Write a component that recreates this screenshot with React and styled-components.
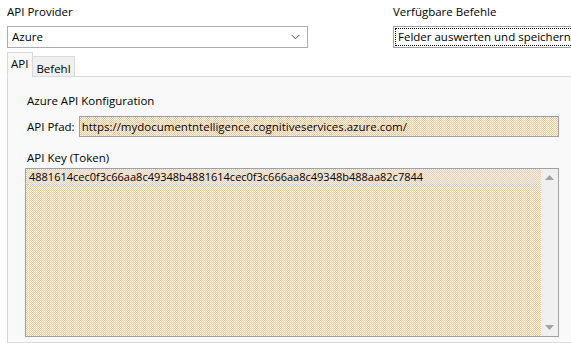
import React from "react";
import styled, { createGlobalStyle } from "styled-components";

const GlobalStyle = createGlobalStyle`
  html, body {
    margin: 0;
    padding: 0;
    background: #ffffff;
  }
  body {
    font-family: "Open Sans", "Liberation Sans", Arial, sans-serif;
    font-size: 11.5px;
    color: #000000;
  }
`;

const Window = styled.div`
  width: 571px;
  height: 343px;
  overflow: hidden;
  background: #ffffff;
  display: flex;
  flex-direction: column;
`;

const TopRow = styled.div`
  display: flex;
  padding: 5px 0 0 7px;
  gap: 85px;
`;

const Field = styled.div`
  display: flex;
  flex-direction: column;
  gap: 7px;
  width: ${(p) => p.width}px;
  flex-shrink: 0;
`;

const Label = styled.label`
  line-height: 14px;
  white-space: nowrap;
`;

const Combo = styled.div`
  height: 22px;
  box-sizing: border-box;
  border: 1px solid ${(p) => (p.focused ? "#a0a0a0" : "#adadad")};
  background: #ffffff;
  display: flex;
  align-items: center;
  padding: ${(p) => (p.focused ? "1px" : "0 0 0 3px")};
`;

const ComboText = styled.span`
  flex: 1;
  white-space: nowrap;
  overflow: hidden;
  line-height: 16px;
  height: 18px;
  box-sizing: border-box;
  display: flex;
  align-items: center;
  padding-left: 1px;
  ${(p) => p.focused && `border: 1px dotted #000000; padding-left: 2px;`}
`;

const Chevron = styled.svg`
  width: 9px;
  height: 6px;
  margin-right: 7px;
`;

const TabStrip = styled.div`
  display: flex;
  align-items: flex-end;
  height: 25px;
  margin: 4px 0 0 7px;
  position: relative;
  z-index: 1;
`;

const Tab = styled.div`
  box-sizing: border-box;
  height: ${(p) => (p.active ? 25 : 21)}px;
  padding: ${(p) => (p.active ? "3px 4px 0 3px" : "4px 3px 0 3px")};
  background: ${(p) => (p.active ? "#f9f9f9" : "#f0f0f0")};
  border: 1px solid #d9d9d9;
  border-bottom: ${(p) => (p.active ? "1px solid #f9f9f9" : "1px solid #d9d9d9")};
  margin-left: ${(p) => (p.active ? 0 : -1)}px;
  line-height: 15px;
  white-space: nowrap;
`;

const Panel = styled.div`
  flex: 1;
  margin: -1px -10px 0 7px;
  background: #f9f9f9;
  border: 1px solid #d9d9d9;
  padding: 17px 21px 0 17px;
  display: flex;
  flex-direction: column;
`;

const SectionTitle = styled.div`
  line-height: 14px;
  margin-left: 2px;
`;

const PathRow = styled.div`
  display: flex;
  align-items: center;
  gap: 4px;
  margin-top: 8px;
  margin-left: 2px;
`;

const dither = `
  background-color: #feead6;
  background-image: repeating-conic-gradient(#fcc38e 0 25%, #ffffff 0 50%);
  background-size: 2px 2px;
`;

const TextBox = styled.div`
  flex: 1;
  height: 21px;
  box-sizing: border-box;
  border: 1px solid #a0a0a0;
  ${dither}
  padding: 0 2px;
  line-height: 19px;
  white-space: nowrap;
  overflow: hidden;
`;

const KeyLabel = styled.div`
  line-height: 14px;
  margin: 14px 0 0 2px;
`;

const KeyArea = styled.div`
  margin-top: 3px;
  height: 169px;
  box-sizing: border-box;
  border: 1px solid #a0a0a0;
  display: flex;
`;

const KeyContent = styled.div`
  flex: 1;
  ${dither}
`;

const KeyLine = styled.div`
  height: 14px;
  line-height: 13px;
  margin: 1px 0 0 1px;
  padding-left: 2px;
  border-bottom: 1px dotted #c8c8c8;
  font-size: 11px;
  white-space: nowrap;
  overflow: hidden;
  background: rgba(232, 224, 216, 0.5);
`;

const ScrollBar = styled.div`
  width: 17px;
  background: #f0f0f0;
  display: flex;
  flex-direction: column;
  justify-content: space-between;
  align-items: center;
  padding: 6px 0;
`;

const Arrow = styled.svg`
  width: 9px;
  height: 5px;
`;

export default function App() {
  return (
    <Window>
      <GlobalStyle />
      <TopRow>
        <Field width={301}>
          <Label>API Provider</Label>
          <Combo>
            <ComboText>Azure</ComboText>
            <Chevron viewBox="0 0 9 6">
              <path d="M0.5 0.8 L4.5 4.8 L8.5 0.8" fill="none" stroke="#5a5a5a" strokeWidth="1" />
            </Chevron>
          </Combo>
        </Field>
        <Field width={200}>
          <Label>Verfügbare Befehle</Label>
          <Combo focused>
            <ComboText focused>Felder auswerten und speichern</ComboText>
          </Combo>
        </Field>
      </TopRow>
      <TabStrip>
        <Tab active>API</Tab>
        <Tab>Befehl</Tab>
      </TabStrip>
      <Panel>
        <SectionTitle>Azure API Konfiguration</SectionTitle>
        <PathRow>
          <span>API Pfad:</span>
          <TextBox>https://mydocumentntelligence.cognitiveservices.azure.com/</TextBox>
        </PathRow>
        <KeyLabel>API Key (Token)</KeyLabel>
        <KeyArea>
          <KeyContent>
            <KeyLine>4881614cec0f3c66aa8c49348b4881614cec0f3c666aa8c49348b488aa82c7844</KeyLine>
          </KeyContent>
          <ScrollBar>
            <Arrow viewBox="0 0 9 5">
              <path d="M0 5 L4.5 0 L9 5 Z" fill="#a3a3a3" />
            </Arrow>
            <Arrow viewBox="0 0 9 5">
              <path d="M0 0 L4.5 5 L9 0 Z" fill="#a3a3a3" />
            </Arrow>
          </ScrollBar>
        </KeyArea>
      </Panel>
    </Window>
  );
}
